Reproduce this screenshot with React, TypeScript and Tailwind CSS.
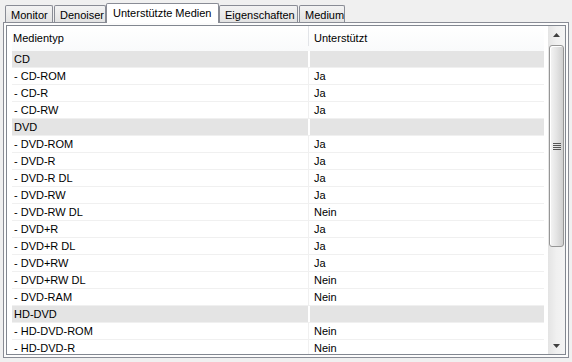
type Row = { name: string; supported?: string; group?: boolean };

const rows: Row[] = [
  { name: "CD", group: true },
  { name: "- CD-ROM", supported: "Ja" },
  { name: "- CD-R", supported: "Ja" },
  { name: "- CD-RW", supported: "Ja" },
  { name: "DVD", group: true },
  { name: "- DVD-ROM", supported: "Ja" },
  { name: "- DVD-R", supported: "Ja" },
  { name: "- DVD-R DL", supported: "Ja" },
  { name: "- DVD-RW", supported: "Ja" },
  { name: "- DVD-RW DL", supported: "Nein" },
  { name: "- DVD+R", supported: "Ja" },
  { name: "- DVD+R DL", supported: "Ja" },
  { name: "- DVD+RW", supported: "Ja" },
  { name: "- DVD+RW DL", supported: "Nein" },
  { name: "- DVD-RAM", supported: "Nein" },
  { name: "HD-DVD", group: true },
  { name: "- HD-DVD-ROM", supported: "Nein" },
  { name: "- HD-DVD-R", supported: "Nein" },
];

function Tab({ label, width, active }: { label: string; width: string; active?: boolean }) {
  if (active) {
    return (
      <div
        className={`${width} h-[20px] rounded-t-[2px] border border-b-0 border-[#898c95] bg-white pl-[6px] pt-[2px] leading-[14px]`}
      >
        {label}
      </div>
    );
  }
  return (
    <div
      className={`${width} mt-[2px] h-[17px] rounded-t-[2px] border border-b-0 border-[#898c95] bg-linear-to-b from-[#f3f3f3] to-[#e3e3e3] pl-[5px] pt-[3px] leading-[13px]`}
    >
      {label}
    </div>
  );
}

function Arrow({ down }: { down?: boolean }) {
  return (
    <svg width="7" height="4" viewBox="0 0 7 4">
      <polygon points={down ? "0,0 7,0 3.5,4" : "0,4 7,4 3.5,0"} fill="#3f3f3f" />
    </svg>
  );
}

function ScrollBar() {
  return (
    <div className="flex w-[17px] flex-col bg-linear-to-r from-[#e4e4e4] via-[#f0f0f0] to-[#f4f4f4]">
      <div className="flex h-[17px] items-center justify-center pt-[1px]">
        <Arrow />
      </div>
      <div className="mx-px mt-[2px] flex h-[202px] items-center justify-center rounded-[3px] border border-[#969696] bg-linear-to-r from-[#f5f5f5] via-[#e4e4e4] to-[#cfcfcf] shadow-[inset_1px_1px_0_#fff]">
        <div className="flex w-[8px] flex-col gap-px">
          <div className="h-px bg-[#555]" />
          <div className="h-px bg-[#555]" />
          <div className="h-px bg-[#555]" />
          <div className="h-px bg-[#555]" />
        </div>
      </div>
      <div className="flex-1" />
      <div className="flex h-[17px] items-center justify-center">
        <Arrow down />
      </div>
    </div>
  );
}

export default function App() {
  return (
    <div className="flex h-[362px] w-[572px] flex-col overflow-hidden bg-[#f0f0f0] px-[3px] pt-[3px] font-['Liberation_Sans',Arial,sans-serif] text-[11px] text-black">
      <div className="relative z-10 flex h-[20px] pl-[2px]">
        <Tab label="Monitor" width="w-[48px]" />
        <div className="w-px" />
        <Tab label="Denoiser" width="w-[52px]" />
        <Tab label="Unterstützte Medien" width="w-[113px]" active />
        <Tab label="Eigenschaften" width="w-[79px]" />
        <div className="w-px" />
        <Tab label="Medium" width="w-[46px]" />
      </div>
      <div className="-mt-px h-[336px] border border-[#898c95] bg-[#fcfcfc] p-[2px]">
        <div className="flex h-[330px] border border-[#828790] bg-white">
          <div className="flex-1 overflow-hidden pl-[5px] pr-[4px]">
            <div className="flex h-[25px] bg-linear-to-b from-white to-[#f9fafb]">
              <div className="w-[296px] pl-[1px] pt-[6px] leading-[13px]">Medientyp</div>
              <div className="mb-[5px] w-px bg-[#e2e4e8]" />
              <div className="flex-1 pl-[5px] pt-[6px] leading-[13px]">Unterstützt</div>
            </div>
            {rows.map((r) => (
              <div key={r.name} className="flex h-[17px] border-b border-[#f0f0f0]">
                {r.group ? (
                  <>
                    <div className="w-[296px] bg-[#e4e4e4] pl-[2px] leading-[16px]">{r.name}</div>
                    <div className="w-[2px]" />
                    <div className="flex-1 bg-[#e4e4e4]" />
                  </>
                ) : (
                  <>
                    <div className="w-[296px] pl-[2px] leading-[16px]">{r.name}</div>
                    <div className="w-px bg-[#f0f0f0]" />
                    <div className="flex-1 pl-[5px] leading-[16px]">{r.supported}</div>
                  </>
                )}
              </div>
            ))}
          </div>
          <ScrollBar />
        </div>
      </div>
    </div>
  );
}
